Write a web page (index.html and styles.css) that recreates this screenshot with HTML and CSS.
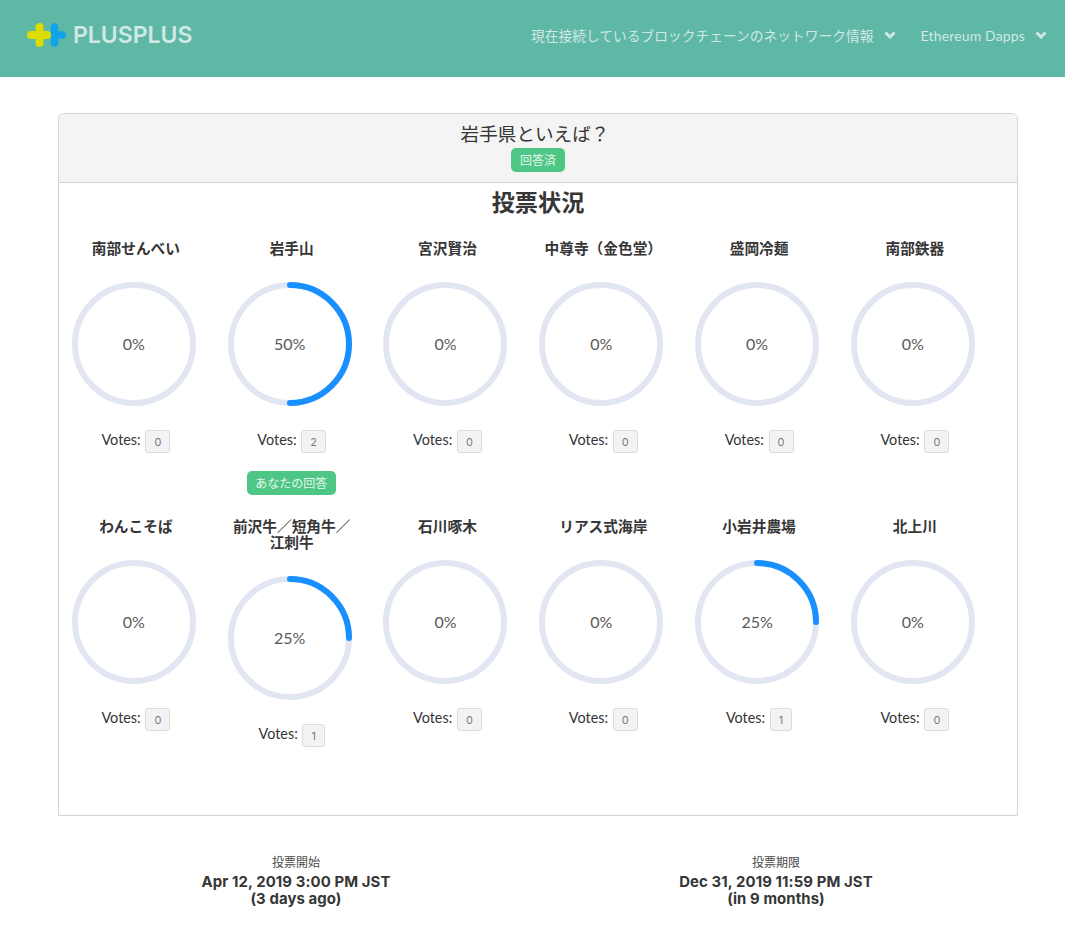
FILE: index.html
```html
<!DOCTYPE html>
<html lang="ja">
<head>
    <meta charset="UTF-8">
    <title>PLUSPLUS</title>
    <link rel="stylesheet" href="styles.css">
</head>
<body>
    <nav class="navbar">
        <a class="brand" href="#">
            <svg class="brand-icon" width="40" height="24" viewBox="0 0 40 24">
                <path d="M28.500 12H36.200M28.500 4V20" class="plus-blue"/>
                <path d="M5 12H21M13.500 4V20" class="plus-yellow"/>
            </svg>
            <span>PLUSPLUS</span>
        </a>
        <div class="nav-menu">
            <a class="nav-item" href="#">現在接続しているブロックチェーンのネットワーク情報
                <svg class="chevron" width="12" height="8" viewBox="0 0 12 8"><path d="M1.500 1.500L6 6L10.500 1.500"/></svg>
            </a>
            <a class="nav-item nav-item-latin" href="#">Ethereum Dapps
                <svg class="chevron" width="12" height="8" viewBox="0 0 12 8"><path d="M1.500 1.500L6 6L10.500 1.500"/></svg>
            </a>
        </div>
    </nav>

    <main class="container">
        <section class="card">
            <header class="card-head">
                <h1>岩手県といえば？</h1>
                <span class="tag">回答済</span>
            </header>
            <div class="card-body">
                <h2>投票状況</h2>
                <div class="results">
                    <div class="choice">
                        <h3>南部せんべい</h3>
                        <div class="ring"><svg viewBox="0 0 124 124"><circle class="trail" cx="62" cy="62" r="59"/></svg><span>0%</span></div>
                        <p class="votes">Votes: <span class="count">0</span></p>
                    </div>
                    <div class="choice">
                        <h3>岩手山</h3>
                        <div class="ring"><svg viewBox="0 0 124 124"><circle class="trail" cx="62" cy="62" r="59"/><circle class="bar" cx="62" cy="62" r="59" pathLength="100" stroke-dasharray="50 100"/></svg><span>50%</span></div>
                        <p class="votes">Votes: <span class="count">2</span></p>
                        <span class="tag tag-answer">あなたの回答</span>
                    </div>
                    <div class="choice">
                        <h3>宮沢賢治</h3>
                        <div class="ring"><svg viewBox="0 0 124 124"><circle class="trail" cx="62" cy="62" r="59"/></svg><span>0%</span></div>
                        <p class="votes">Votes: <span class="count">0</span></p>
                    </div>
                    <div class="choice">
                        <h3>中尊寺（金色堂）</h3>
                        <div class="ring"><svg viewBox="0 0 124 124"><circle class="trail" cx="62" cy="62" r="59"/></svg><span>0%</span></div>
                        <p class="votes">Votes: <span class="count">0</span></p>
                    </div>
                    <div class="choice">
                        <h3>盛岡冷麺</h3>
                        <div class="ring"><svg viewBox="0 0 124 124"><circle class="trail" cx="62" cy="62" r="59"/></svg><span>0%</span></div>
                        <p class="votes">Votes: <span class="count">0</span></p>
                    </div>
                    <div class="choice">
                        <h3>南部鉄器</h3>
                        <div class="ring"><svg viewBox="0 0 124 124"><circle class="trail" cx="62" cy="62" r="59"/></svg><span>0%</span></div>
                        <p class="votes">Votes: <span class="count">0</span></p>
                    </div>
                    <div class="choice">
                        <h3>わんこそば</h3>
                        <div class="ring"><svg viewBox="0 0 124 124"><circle class="trail" cx="62" cy="62" r="59"/></svg><span>0%</span></div>
                        <p class="votes">Votes: <span class="count">0</span></p>
                    </div>
                    <div class="choice">
                        <h3>前沢牛／短角牛／江刺牛</h3>
                        <div class="ring"><svg viewBox="0 0 124 124"><circle class="trail" cx="62" cy="62" r="59"/><circle class="bar" cx="62" cy="62" r="59" pathLength="100" stroke-dasharray="25 100"/></svg><span>25%</span></div>
                        <p class="votes">Votes: <span class="count">1</span></p>
                    </div>
                    <div class="choice">
                        <h3>石川啄木</h3>
                        <div class="ring"><svg viewBox="0 0 124 124"><circle class="trail" cx="62" cy="62" r="59"/></svg><span>0%</span></div>
                        <p class="votes">Votes: <span class="count">0</span></p>
                    </div>
                    <div class="choice">
                        <h3>リアス式海岸</h3>
                        <div class="ring"><svg viewBox="0 0 124 124"><circle class="trail" cx="62" cy="62" r="59"/></svg><span>0%</span></div>
                        <p class="votes">Votes: <span class="count">0</span></p>
                    </div>
                    <div class="choice">
                        <h3>小岩井農場</h3>
                        <div class="ring"><svg viewBox="0 0 124 124"><circle class="trail" cx="62" cy="62" r="59"/><circle class="bar" cx="62" cy="62" r="59" pathLength="100" stroke-dasharray="25 100"/></svg><span>25%</span></div>
                        <p class="votes">Votes: <span class="count">1</span></p>
                    </div>
                    <div class="choice">
                        <h3>北上川</h3>
                        <div class="ring"><svg viewBox="0 0 124 124"><circle class="trail" cx="62" cy="62" r="59"/></svg><span>0%</span></div>
                        <p class="votes">Votes: <span class="count">0</span></p>
                    </div>
                </div>
            </div>
        </section>

        <div class="period">
            <div class="period-item">
                <p class="period-label">投票開始</p>
                <p class="period-date">Apr 12, 2019 3:00 PM JST<br>(3 days ago)</p>
            </div>
            <div class="period-item">
                <p class="period-label">投票期限</p>
                <p class="period-date">Dec 31, 2019 11:59 PM JST<br>(in 9 months)</p>
            </div>
        </div>
    </main>
</body>
</html>
```

FILE: styles.css
```css
:root {
    --primary-color: #5fb7a6;
    --nav-text: #d0e9e3;
    --text-color: #363636;
    --border-color: #d4d4d4;
    --tag-color: #4ec685;
    --trail-color: #e1e6f2;
    --bar-color: #1890ff;
}

* {
    box-sizing: border-box;
}

body {
    margin: 0;
    font-family: "Noto Sans CJK JP", sans-serif;
    color: var(--text-color);
    background: #fff;
}

p, h1, h2, h3 {
    margin: 0;
}

.navbar {
    display: flex;
    justify-content: space-between;
    align-items: center;
    height: 77px;
    padding: 0 18px 7px 26px;
    background: var(--primary-color);
}

.brand {
    display: flex;
    align-items: center;
    gap: 7px;
    color: var(--nav-text);
    text-decoration: none;
    font-family: Inter, sans-serif;
    font-size: 23px;
    font-weight: 600;
}

.plus-yellow, .plus-blue {
    fill: none;
    stroke-linecap: round;
}

.plus-yellow {
    stroke: #dcdc00;
    stroke-width: 8;
}

.plus-blue {
    stroke: #0ea5e9;
    stroke-width: 7.500;
}

.nav-menu {
    display: flex;
    gap: 25px;
}

.nav-item {
    display: flex;
    align-items: center;
    gap: 10px;
    color: var(--nav-text);
    text-decoration: none;
    font-family: Lato, "Noto Sans CJK JP", sans-serif;
    font-size: 13.750px;
}

.nav-item-latin {
    font-size: 14px;
    letter-spacing: 0.150px;
}

.chevron {
    fill: none;
    stroke: var(--nav-text);
    stroke-width: 3;
}

.container {
    width: 960px;
    margin: 36px 0 0 58px;
}

.card {
    height: 703px;
    border: 1px solid var(--border-color);
    border-radius: 6px 6px 0 0;
}

.card-head {
    display: flex;
    flex-direction: column;
    align-items: center;
    height: 69px;
    padding-top: 5px;
    background: #f4f4f4;
    border-bottom: 1px solid var(--border-color);
    border-radius: 5px 5px 0 0;
}

.card-head h1 {
    margin: 0 6px 1px 0;
    font-size: 18.600px;
    font-weight: 400;
    line-height: 28px;
}

.tag {
    display: inline-block;
    padding: 0 8.500px;
    height: 24px;
    line-height: 24px;
    font-size: 12px;
    color: #e4f7ec;
    background: var(--tag-color);
    border-radius: 5px;
}

.tag-answer {
    margin: 1px 0 0 3px;
}

.card-body h2 {
    text-align: center;
    font-size: 23.200px;
    font-weight: 700;
    line-height: 36px;
}

.results {
    display: grid;
    grid-template-columns: repeat(6, 155.800px);
    grid-auto-rows: 278px;
    margin: 11px 0 0 -3px;
}

.choice {
    display: flex;
    flex-direction: column;
    align-items: center;
    text-align: center;
}

.choice h3 {
    width: 130px;
    min-height: 16px;
    margin: 10px 0 0 4px;
    font-size: 14.700px;
    font-weight: 700;
    line-height: 16px;
}

.ring {
    position: relative;
    width: 124px;
    height: 124px;
    margin-top: 26px;
}

.ring svg {
    display: block;
    transform: rotate(-90deg);
}

.ring circle {
    fill: none;
    stroke-width: 6;
}

.ring .trail {
    stroke: var(--trail-color);
}

.ring .bar {
    stroke: var(--bar-color);
    stroke-linecap: round;
}

.ring span {
    position: absolute;
    inset: 0;
    display: flex;
    align-items: center;
    justify-content: center;
    padding-bottom: 2px;
    font-family: Lato, sans-serif;
    font-size: 16px;
    color: #595959;
}

.votes {
    margin: 22px 0 17px 4px;
    font-family: Lato, sans-serif;
    font-size: 14.400px;
    line-height: 24px;
}

.count {
    display: inline-block;
    height: 23px;
    margin-left: 1px;
    padding: 0 8px;
    font-family: Inter, sans-serif;
    line-height: 22px;
    font-size: 11px;
    color: #7a7a7a;
    text-align: center;
    background: #f3f3f5;
    border: 1px solid #dcdcdc;
    border-radius: 3px;
    vertical-align: middle;
}

.period {
    display: grid;
    grid-template-columns: 480px 480px;
    margin: 38px 0 0 -2px;
    text-align: center;
}

.period-label {
    font-size: 12px;
    line-height: 16px;
    color: #4a4a4a;
}

.period-date {
    margin-top: 4px;
    font-family: Inter, sans-serif;
    font-size: 14.900px;
    font-weight: 700;
    letter-spacing: 0.100px;
    line-height: 17px;
}
```
